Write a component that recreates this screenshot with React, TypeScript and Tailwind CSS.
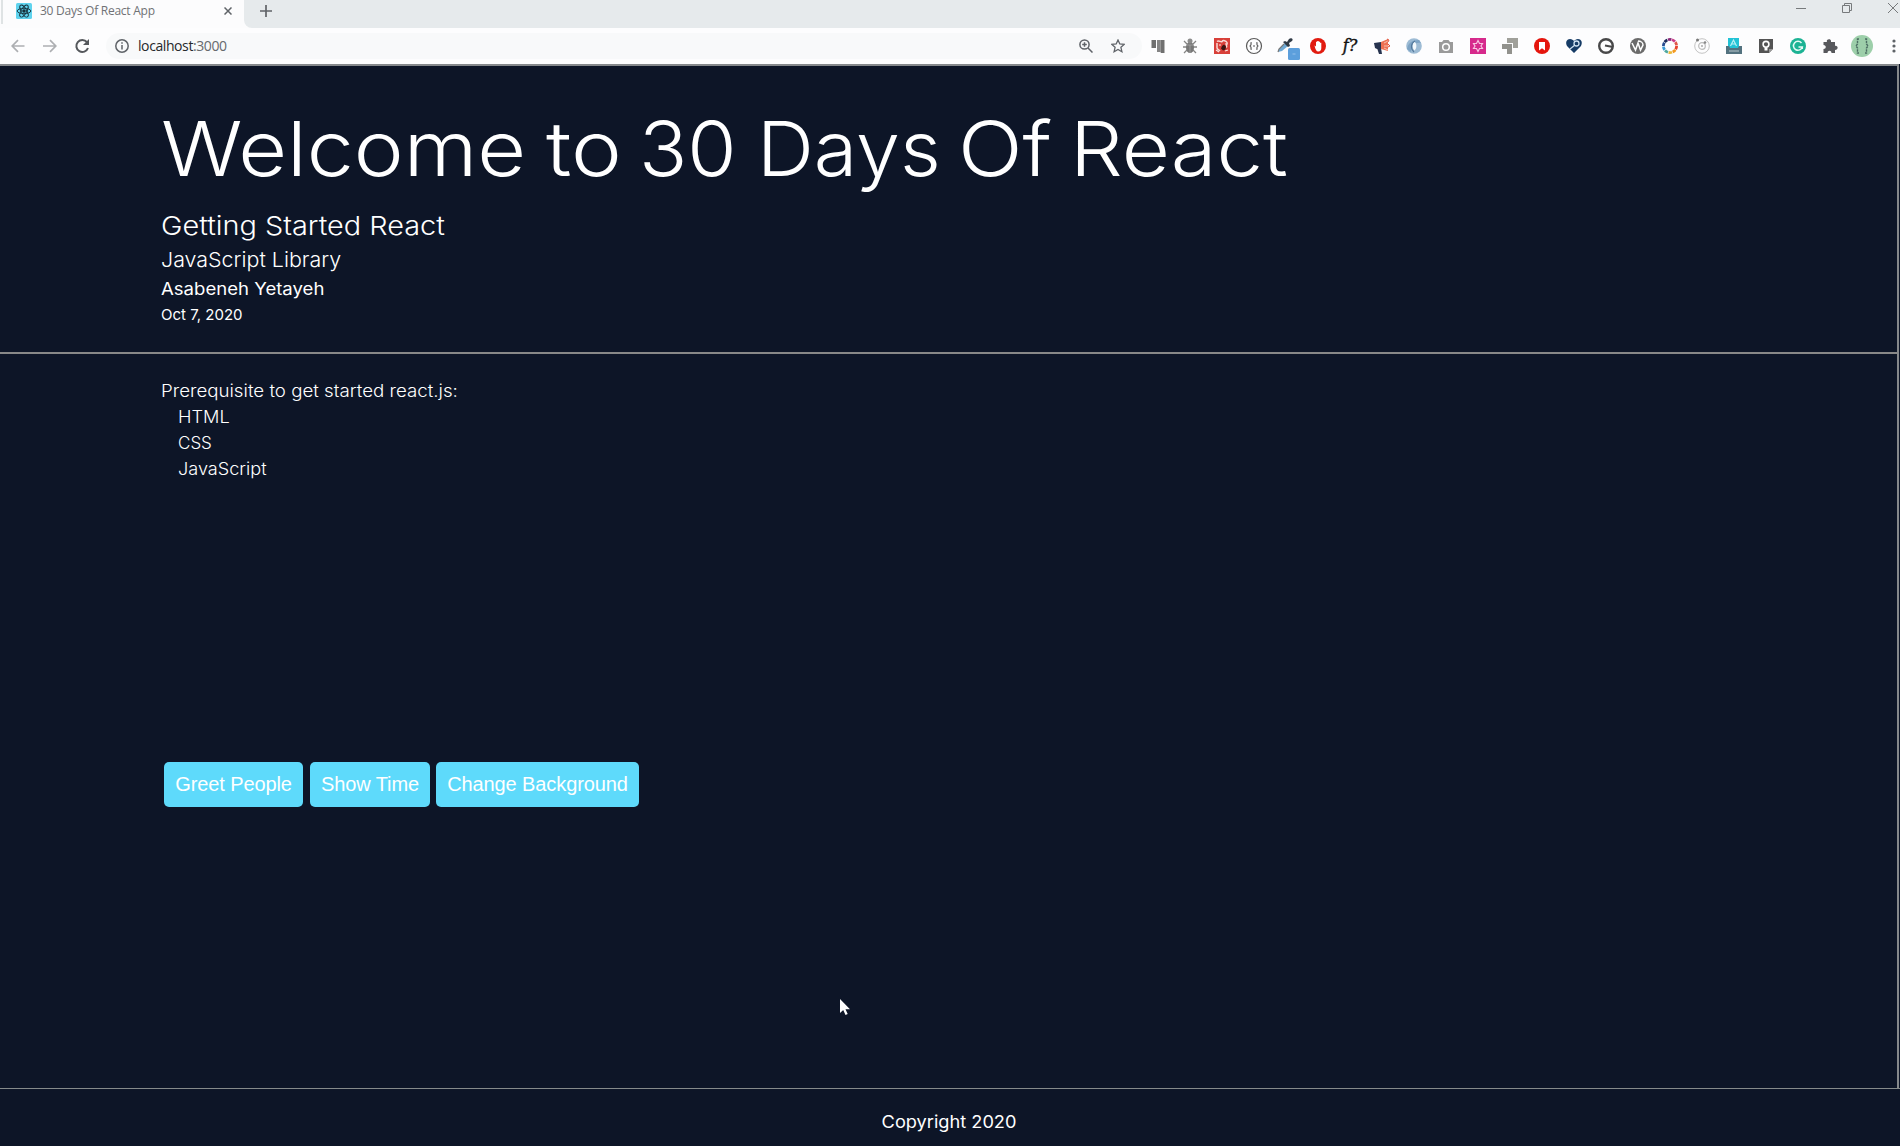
import type { ReactNode } from 'react';

function Ext({ children }: { children: ReactNode }) {
  return (
    <span className="flex w-8 shrink-0 items-center justify-center">
      <svg className="h-4 w-4 overflow-visible" viewBox="0 0 16 16" fill="none">
        {children}
      </svg>
    </span>
  );
}

const ringColors = ['#e8432e', '#f39a21', '#e9b93a', '#4fa8a0', '#3b9bd6', '#274b8f', '#1d2a5c', '#8c2a7a', '#c93a86', '#e0574a'];

function Extensions() {
  return (
    <div className="flex items-center">
      <Ext>
        <path d="M1.500 2H6v8H1.500z" fill="#6f6f6f" />
        <path d="M7 2h3.700v12H7z" fill="#858585" />
        <path d="M10.700 2h3.800v13h-3.800z" fill="#707070" />
      </Ext>
      <Ext>
        <path d="M2 3l3 3M14 3l-3 3M1 9h14M2 15l3-3M14 15l-3-3" stroke="#858585" strokeWidth="1.300" />
        <ellipse cx="8" cy="9.500" rx="4" ry="5.500" fill="#777" />
        <circle cx="8" cy="3" r="2.500" fill="#8c8c8c" />
        <path d="M4 7h8M8 7v8" stroke="#aaa" strokeWidth=".7" />
      </Ext>
      <Ext>
        <path d="M0 0h16v16H0z" fill="#d8403a" />
        <path d="M3 3.500C5 1.500 7 5 8 3.500s4-1 5 1-2 3 0 5M3 5v5c1 2 2 2 3 3" stroke="#f8d9d5" strokeWidth="1.500" />
        <path d="M8 8l2-1.500 2 2-.5 3-2.500 1-2-2z" fill="#3a1512" />
        <path d="M2 12l3 2M11 13l3-1M5 7h2M11 6h2" stroke="#fbeae8" strokeWidth="1.200" />
      </Ext>
      <Ext>
        <circle cx="8" cy="8" r="7.500" stroke="#5a5a5a" strokeWidth="1.200" />
        <path d="M5.800 4.800H5v2L4 8l1 1.200v2h.8M10.200 4.800h.8v2L12 8l-1 1.200v2h-.8M7 8h2" stroke="#555" strokeWidth="1.100" />
      </Ext>
      <Ext>
        <path d="M0 14l1-3 6-6 3 3-6 5-4 1z" fill="#6fa9d4" />
        <path d="M0 14l1-3 5-5" stroke="#777" strokeWidth="1.200" />
        <path d="M7 3l2 1 2-3c2-2 5 0 3 2l-3 2 1 3-2 1-5-5z" fill="#303a45" />
        <rect x="10" y="10" width="12" height="12" rx="1.500" fill="#5c9fdc" />
        <path d="M14.500 16h3" stroke="#8cbcea" strokeWidth="1.200" />
      </Ext>
      <Ext>
        <circle cx="8" cy="8" r="8" fill="#e11b10" />
        <path d="M4.500 7.500c1 0 1 1 1.500 1V3.800h1.200V3h1.500v.7H10v1h1.300V10c0 2-1 3.500-3 3.500S5.500 11.500 4.500 7.500z" fill="#fff" />
      </Ext>
      <span className="flex w-8 items-center justify-center font-['DejaVu_Serif',serif] text-[16px] italic leading-4 text-[#111] [-webkit-text-stroke:0.4px_#111]">
        f?
      </span>
      <Ext>
        <path d="M0 5l7-1v7H3L1 10z" fill="#26334f" />
        <path d="M3 10h4l1 6H5z" fill="#26334f" />
        <path d="M7 4l7-3v12l-7-2z" fill="#ee7052" />
        <path d="M10 5l4-2M10 8h6M10 10l4 2" stroke="#f7c0af" />
        <path d="M13 1l2 1-1 2M14 6l2 2-2 1" stroke="#e2553f" />
      </Ext>
      <Ext>
        <circle cx="8" cy="8" r="7.800" fill="#9dbbd4" />
        <path d="M1 11c1-6 5-9 12-9l2 3C9 4 6 7 5 14z" fill="#7ea4c5" />
        <path d="M8.500 3.500c2.500 2 2.500 7 0 9-2.500-2-2.500-7 0-9z" fill="#f3f8fb" />
        <path d="M9 3c-4 2-5 7-1 11" stroke="#55799b" strokeWidth="1.100" />
      </Ext>
      <Ext>
        <path d="M1 4h3l1.500-2h5L12 4h3v11H1z" fill="#9a9a9a" />
        <circle cx="8" cy="9" r="3.300" stroke="#fff" strokeWidth="1.500" />
      </Ext>
      <Ext>
        <path d="M0 0h16v16H0z" fill="#d62a8c" />
        <path d="M8 2.500l1.500 3h3L11 8l1.500 2.500h-3L8 13.500l-1.500-3h-3L5 8 3.500 5.500h3z" stroke="#f8c4e1" strokeWidth="1.200" />
      </Ext>
      <Ext>
        <path d="M5 0h11v10h-5V5H5z" fill="#a0a09a" />
        <path d="M0 6h10v10H5v-5H0z" fill="#92928d" />
      </Ext>
      <Ext>
        <circle cx="8" cy="8" r="8" fill="#e5150d" />
        <path d="M5 4h6v8.500L8 10.200 5 12.500z" fill="#fff" />
      </Ext>
      <Ext>
        <path d="M8 15L1 8C-1 4 1 1 4 1c2 0 3 1 4 2 1-1 2-2 4-2 3 0 5 3 3 7z" fill="#163c66" />
        <circle cx="10.500" cy="5.500" r="2.500" stroke="#cfe2f1" strokeWidth="1.300" />
        <path d="M9 7l-5 4" stroke="#cfe2f1" strokeWidth="1.300" />
      </Ext>
      <Ext>
        <circle cx="8" cy="8" r="6.800" stroke="#484849" strokeWidth="2.400" />
        <path d="M7 7.500l8 1.500" stroke="#484849" strokeWidth="2" />
      </Ext>
      <Ext>
        <circle cx="8" cy="8" r="8" fill="#6b6b6b" />
        <path d="M2 5l3.500 7 2.500-7 2.500 7 2.500-5c0-2-2-4-5-4" stroke="#fff" strokeWidth="1.500" />
      </Ext>
      <Ext>
        {ringColors.map((c, i) => (
          <circle key={c} cx="8" cy="8" r="6.600" stroke={c} strokeWidth="2.800" pathLength="100" strokeDasharray="8.500 91.500" strokeDashoffset={-i * 10} />
        ))}
      </Ext>
      <Ext>
        <circle cx="8" cy="8" r="7.300" stroke="#c4c4c4" />
        <circle cx="8" cy="8" r="3.300" stroke="#bbb" strokeWidth="1.200" />
        <circle cx="8" cy="8" r="1" fill="#aaa" />
        <circle cx="3.500" cy="2" r="1.500" fill="#777" />
        <circle cx="11" cy="4.500" r="1.300" fill="#888" />
      </Ext>
      <Ext>
        <path d="M2 0h11v10H2z" fill="#22c3d6" />
        <path d="M4.500 8L7.500 2l3 6M5.500 6h4" stroke="#b8f1f5" strokeWidth="1.200" />
        <path d="M0 8h3l1 2h8l1-2h3v8H0z" fill="#53727f" />
        <path d="M3 13h10" stroke="#b9c6cc" />
      </Ext>
      <Ext>
        <path d="M1 1h14v10l-4 4H1z" fill="#545454" />
        <path d="M11 15v-4h4z" fill="#999" />
        <circle cx="8" cy="6.300" r="2.900" stroke="#fff" strokeWidth="1.600" />
        <path d="M6.500 9.500h3v3h-3z" fill="#fff" />
      </Ext>
      <Ext>
        <circle cx="8" cy="8" r="8" fill="#1cb394" />
        <path d="M11.500 5A4.500 4.500 0 1 0 12.300 9H8.500M12.300 8.500V11" stroke="#e6faf5" strokeWidth="1.500" />
      </Ext>
      <Ext>
        <path d="M1.500 4h3.500C3.500 1 9 0 9 3v1h4v4c3-1 4 4 0 4v3H9.500c0-3-4-3-4 0h-4v-4c3 0 3-4 0-4z" fill="#57585c" />
      </Ext>
    </div>
  );
}

function TabStrip() {
  return (
    <div className="flex h-7 bg-[#e6eaec]">
      <div className="flex h-7 w-[244px] bg-[#fcfcfd] pl-px">
        <span className="h-6 w-[2px] bg-[#dfe3e4]" />
        <svg className="ml-[13px] mt-[3px] h-4 w-4" viewBox="0 0 16 16" fill="none" stroke="#15303a" strokeWidth=".9">
          <rect width="16" height="16" rx="1.500" fill="#5fd3ee" stroke="none" />
          <ellipse cx="8" cy="8" rx="6.800" ry="2.700" />
          <ellipse cx="8" cy="8" rx="6.800" ry="2.700" transform="rotate(60 8 8)" />
          <ellipse cx="8" cy="8" rx="6.800" ry="2.700" transform="rotate(120 8 8)" />
          <circle cx="8" cy="8" r="1.300" fill="#15303a" />
        </svg>
        <span className="ml-2 mt-[3px] w-[184px] whitespace-nowrap font-['Open_Sans',sans-serif] text-[12px] leading-4 tracking-[-0.25px] text-[#707275]">
          30 Days Of React App
        </span>
        <svg className="mt-[7px] h-2 w-2 shrink-0" viewBox="0 0 8 8" stroke="#5f6368" strokeWidth="1.500">
          <path d="M.5.500l7 7M7.500.500l-7 7" />
        </svg>
      </div>
      <div className="flex flex-1 bg-[#fcfcfd]">
        <div className="flex flex-1 rounded-bl-lg bg-[#e6eaec]">
          <svg className="ml-4 mt-[5px] h-3 w-3" viewBox="0 0 12 12" stroke="#606367" strokeWidth="1.700">
            <path d="M6 0v12M0 6h12" />
          </svg>
          <svg className="ml-auto mr-[2px] mt-[3px] h-[10px] w-[102px]" viewBox="0 0 102 10" fill="none" stroke="#777a7c">
            <path d="M0 5.500h10M46.500 2.500h7v7h-7zM48.500 2.500v-2h7v7h-2M92 0l10 10M102 0L92 10" />
          </svg>
        </div>
      </div>
    </div>
  );
}

function Toolbar() {
  return (
    <div className="flex h-9 items-center bg-[#fdfdfe] pl-[11px]">
      <svg className="h-4 w-[80px]" viewBox="0 0 80 16" fill="none">
        <path d="M13.500 8H1.500M7 2.200L1.200 8 7 13.800M32 8h12.500M39 2.200L44.800 8 39 13.800" stroke="#adafb2" strokeWidth="1.700" />
        <path d="M76 4.200A6 6 0 1 0 77 10" stroke="#55585c" strokeWidth="2" />
        <path d="M78 1v6h-6z" fill="#55585c" />
      </svg>
      <div className="ml-[15px] flex h-[26px] w-[1036px] items-center rounded-full bg-[#f8f9fa] pl-[9px]">
        <svg className="h-[14px] w-[14px]" viewBox="0 0 14 14" fill="none" stroke="#5f6368" strokeWidth="1.500">
          <circle cx="7" cy="7" r="6.200" />
          <path d="M7 6v4.500M7 3.200v1.500" />
        </svg>
        <span className="ml-[9px] font-['Open_Sans',sans-serif] text-[14px] leading-5 tracking-[-0.41px] text-[#66696d]">
          <span className="text-[#26282b]">localhost</span>:3000
        </span>
        <svg className="ml-auto mr-[18px] h-[14px] w-[14px]" viewBox="0 0 14 14" fill="none" stroke="#5f6368" strokeWidth="1.500">
          <circle cx="5.500" cy="5.500" r="4.600" />
          <path d="M9 9l4.500 4.500M5.500 3.200v4.600M3.200 5.500h4.600" />
        </svg>
        <svg className="mr-[17px] h-[14px] w-[14px]" viewBox="0 0 14 14" fill="none" stroke="#5f6368" strokeWidth="1.300">
          <path d="M7 1l1.800 4 4.400.4-3.300 2.900 1 4.400L7 10.400l-3.900 2.300 1-4.400L.8 5.400 5.200 5z" />
        </svg>
      </div>
      <Extensions />
      <div className="ml-[5px] flex h-[22px] w-[22px] items-center justify-center rounded-full bg-[#9dcfaa]">
        <svg className="h-4 w-[14px]" viewBox="0 0 14 16" fill="none" stroke="#4c6e63" strokeWidth="1.400" strokeDasharray="2.500 .7">
          <path d="M4 1H2.500v5L1 8l1.500 2v5H4M10 1h1.500v5L13 8l-1.500 2v5H10" />
        </svg>
      </div>
      <svg className="ml-[19px] h-4 w-[6px]" viewBox="0 0 6 16" fill="#5f6368">
        <circle cx="2" cy="3" r="1.600" />
        <circle cx="2" cy="8" r="1.600" />
        <circle cx="2" cy="13" r="1.600" />
      </svg>
    </div>
  );
}

const titleWords = [
  { word: 'Welcome', cls: 'w-[385px] scale-x-[1.109]' },
  { word: 'to', cls: 'w-[93px] scale-x-[1.13]' },
  { word: '30', cls: 'w-[118px] scale-x-[1.05]' },
  { word: 'Days', cls: 'w-[201px] scale-x-[1.04]' },
  { word: 'Of', cls: 'w-[112px] scale-x-[1.12]' },
  { word: 'React', cls: 'w-[220px] scale-x-[1.095]' },
];

const buttons = [
  { label: 'Greet People', cls: 'w-[139px]' },
  { label: 'Show Time', cls: 'ml-[7px] w-[120px]' },
  { label: 'Change Background', cls: 'ml-[6px] w-[203px]' },
];

export default function App() {
  return (
    <div className="relative flex h-[1146px] w-[1900px] flex-col overflow-hidden bg-[#0d1527] font-['Inter',sans-serif] text-white">
      <TabStrip />
      <Toolbar />
      <div className="mr-px flex h-[1024px] shrink-0 flex-col border-r-2 border-t-2 border-[#85888b]">
        <header className="flex h-[288px] shrink-0 flex-col border-b-2 border-[#888] pl-[161px] pt-[34px]">
          <h1 className="flex h-[96px] text-[76px] font-light leading-[96px]">
            {titleWords.map((t) => (
              <span key={t.word} className={`block shrink-0 origin-left whitespace-nowrap ${t.cls}`}>
                {t.word}{' '}
              </span>
            ))}
          </h1>
          <h2 className="mt-[13px] origin-left scale-x-[1.11] text-[26px] font-light leading-[34px]">Getting Started React</h2>
          <h3 className="origin-left scale-x-[1.045] text-[20.5px] font-light leading-[34px]">JavaScript Library</h3>
          <p className="origin-left scale-x-[1.092] text-[17px] font-[370] leading-6">Asabeneh Yetayeh</p>
          <small className="mt-[2px] block text-[15px] font-[370] leading-6">Oct 7, 2020</small>
        </header>
        <main className="flex flex-1 flex-col pl-[161px]">
          <div className="mt-6 text-[17px] font-[350] leading-[26px]">
            <p className="origin-left scale-x-[1.1]">Prerequisite to get started react.js:</p>
            <ul className="pl-[17px]">
              <li className="origin-left scale-x-[1.07]">HTML</li>
              <li>CSS</li>
              <li className="origin-left scale-x-[1.065]">JavaScript</li>
            </ul>
          </div>
          <div className="ml-[3px] mt-[280px] flex">
            {buttons.map((b) => (
              <button key={b.label} className={`h-[45px] rounded-[5px] bg-[#5edafb] pb-px font-['Liberation_Sans',sans-serif] text-[20px] tracking-[-0.1px] text-white ${b.cls}`}>
                {b.label}
              </button>
            ))}
          </div>
        </main>
      </div>
      <footer className="flex flex-1 justify-center border-t border-[#858a8a] pt-5 text-[17px] leading-[26px]">
        <span className="-ml-[2px] block h-[26px] scale-x-[1.07]">Copyright 2020</span>
      </footer>
      <svg className="absolute left-[839px] top-[998px] h-[19px] w-[13px]" viewBox="0 0 13 19" fill="#fff">
        <path d="M1 1v14l3.200-3 2.300 5 2.200-1-2.200-4.800H11z" />
      </svg>
    </div>
  );
}
